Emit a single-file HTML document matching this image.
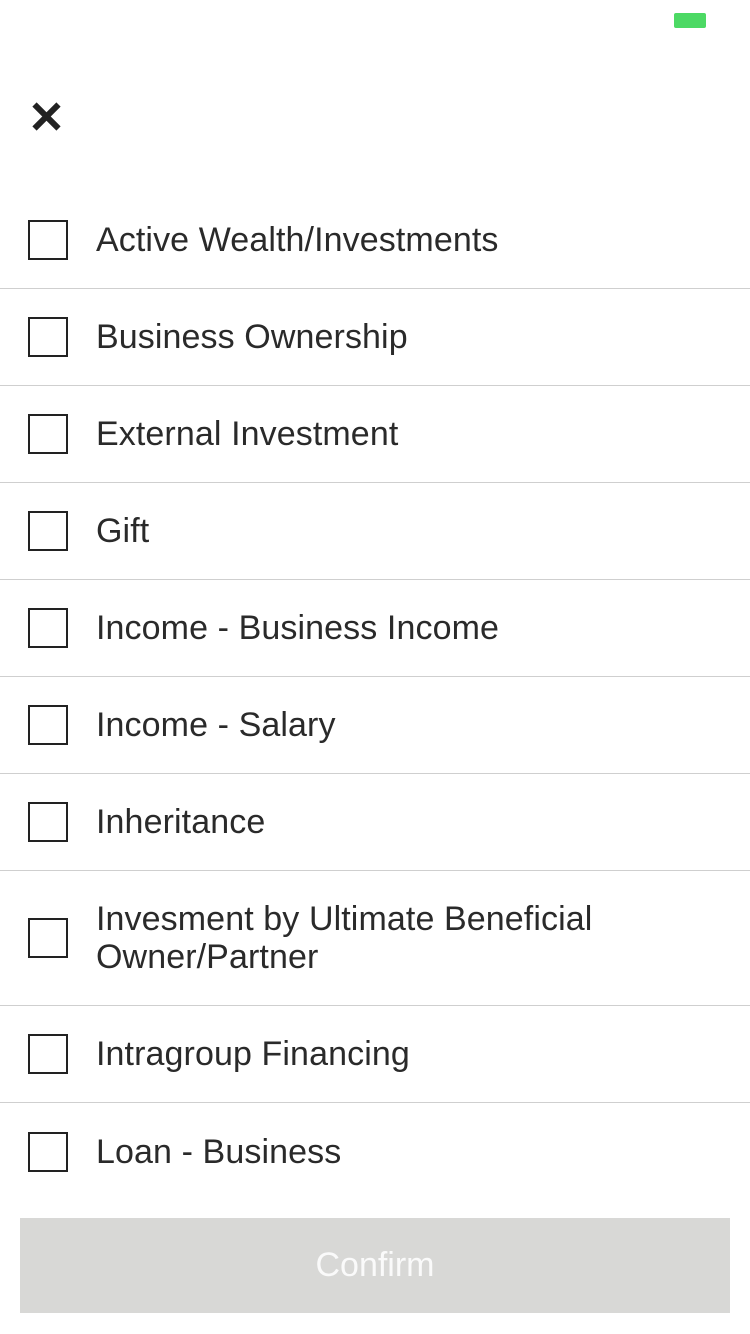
<!DOCTYPE html>
<html><head><meta charset="utf-8"><style>
*{margin:0;padding:0;box-sizing:border-box}
body{width:750px;height:1334px;background:#fff;position:relative;font-family:"Liberation Sans",sans-serif;color:#2a2a2a;overflow:hidden}
.bat{position:absolute;left:674px;top:13px;width:32px;height:15px;background:#4cd964;border-radius:2px}
.x{position:absolute;left:31px;top:101px}
.row{position:absolute;left:0;width:750px;border-bottom:1px solid #cfcfcf;display:flex;align-items:center}
.cb{position:absolute;left:28px;width:40px;height:40px;border:2px solid #222}
.t{position:absolute;left:96px;font-size:34px;line-height:38px;letter-spacing:0.1px}
.btn{position:absolute;left:20px;top:1218px;width:710px;height:95px;background:#d8d8d6;color:#fafafa;font-size:34px;text-align:center;line-height:95px}
</style></head><body>
<div class="bat"></div>
<svg class="x" width="31" height="31" viewBox="0 0 31 31"><path d="M3.5 3.5L27.5 27.5M27.5 3.5L3.5 27.5" stroke="#222" stroke-width="6" stroke-linecap="butt"/></svg>

<div class="row" style="top:192px;height:97px"><div class="cb"></div><div class="t">Active Wealth/Investments</div></div>
<div class="row" style="top:289px;height:97px"><div class="cb"></div><div class="t">Business Ownership</div></div>
<div class="row" style="top:386px;height:97px"><div class="cb"></div><div class="t">External Investment</div></div>
<div class="row" style="top:483px;height:97px"><div class="cb"></div><div class="t">Gift</div></div>
<div class="row" style="top:580px;height:97px"><div class="cb"></div><div class="t">Income - Business Income</div></div>
<div class="row" style="top:677px;height:97px"><div class="cb"></div><div class="t">Income - Salary</div></div>
<div class="row" style="top:774px;height:97px"><div class="cb"></div><div class="t">Inheritance</div></div>
<div class="row" style="top:871px;height:135px"><div class="cb"></div><div class="t">Invesment by Ultimate Beneficial<br>Owner/Partner</div></div>
<div class="row" style="top:1006px;height:97px"><div class="cb"></div><div class="t">Intragroup Financing</div></div>
<div class="row" style="top:1103px;height:97px;border-bottom:none"><div class="cb"></div><div class="t">Loan - Business</div></div>
<div class="btn">Confirm</div>
</body></html>
